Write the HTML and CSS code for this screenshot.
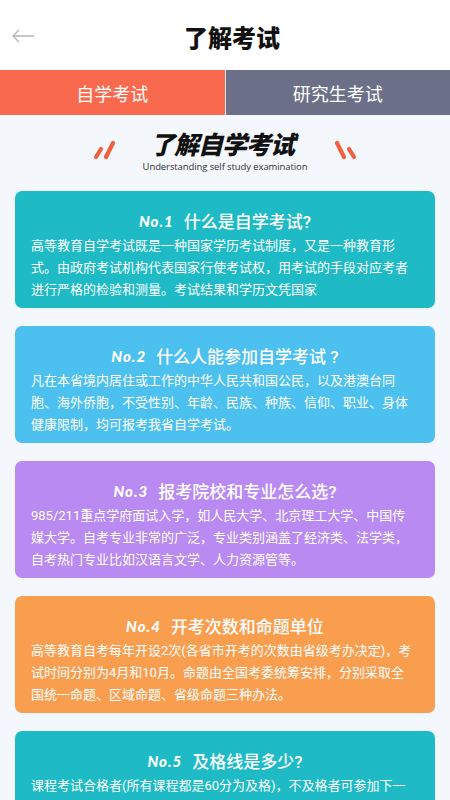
FILE: index.html
```html
<!DOCTYPE html>
<html lang="zh-CN">
<head>
    <meta charset="UTF-8">
    <title>了解考试</title>
    <link rel="stylesheet" href="styles.css">
</head>
<body>
    <div class="top-bar">
        <div class="back">
            <svg width="24" height="14" viewBox="0 0 24 14">
                <path d="M23 7H2M8 1L2 7l6 6" fill="none" stroke="#b5b5b5" stroke-width="1.3"/>
            </svg>
        </div>
        <h1>了解考试</h1>
        <div></div>
    </div>

    <div class="tabs">
        <div class="tab active">自学考试</div>
        <div class="tab">研究生考试</div>
    </div>

    <div class="section-head">
        <svg class="marks" width="24" height="20" viewBox="0 0 24 20">
            <path d="M3 17L8 9M13 17L20 3" stroke="#f2603f" stroke-width="4.2" stroke-linecap="round"/>
        </svg>
        <div class="head-text">
            <div class="head-title">了解自学考试</div>
            <div class="head-sub">Understanding self study examination</div>
        </div>
        <svg class="marks" width="24" height="20" viewBox="0 0 24 20">
            <path d="M4 3L11 17M16 9L21 17" stroke="#f2603f" stroke-width="4.2" stroke-linecap="round"/>
        </svg>
    </div>

    <div class="cards">
        <div class="card teal">
            <div class="card-title"><span class="num">No.1</span>什么是自学考试?</div>
            <p>高等教育自学考试既是一种国家学历考试制度，又是一种教育形式。由政府考试机构代表国家行使考试权，用考试的手段对应考者进行严格的检验和测量。考试结果和学历文凭国家</p>
        </div>
        <div class="card blue">
            <div class="card-title"><span class="num">No.2</span>什么人能参加自学考试 ?</div>
            <p>凡在本省境内居住或工作的中华人民共和国公民，以及港澳台同胞、海外侨胞，不受性别、年龄、民族、种族、信仰、职业、身体健康限制，均可报考我省自学考试。</p>
        </div>
        <div class="card purple">
            <div class="card-title"><span class="num">No.3</span>报考院校和专业怎么选?</div>
            <p>985/211重点学府面试入学，如人民大学、北京理工大学、中国传媒大学。自考专业非常的广泛，专业类别涵盖了经济类、法学类，自考热门专业比如汉语言文学、人力资源管等。</p>
        </div>
        <div class="card orange">
            <div class="card-title"><span class="num">No.4</span>开考次数和命题单位</div>
            <p>高等教育自考每年开设2次(各省市开考的次数由省级考办决定)，考试时间分别为4月和10月。命题由全国考委统筹安排，分别采取全国统一命题、区域命题、省级命题三种办法。</p>
        </div>
        <div class="card teal">
            <div class="card-title"><span class="num">No.5</span>及格线是多少?</div>
            <p>课程考试合格者(所有课程都是60分为及格)，不及格者可参加下一次考试，合格成绩长期有效，可累积计算。</p>
        </div>
    </div>
</body>
</html>
```

FILE: styles.css
```css
body {
    margin: 0;
    background: #f4f7fc;
    font-family: Roboto, "Noto Sans CJK SC", sans-serif;
    color: #222;
}

.top-bar {
    height: 70px;
    background: white;
    display: grid;
    grid-template-columns: 60px 1fr 60px;
    align-items: center;
}

.back {
    padding-left: 11px;
    padding-top: 2px;
    display: flex;
}

.top-bar h1 {
    margin: 0;
    text-align: center;
    font-size: 24px;
    font-weight: 900;
    color: #111;
    padding: 2px 0 0 14px;
}

.tabs {
    display: flex;
    height: 45px;
    gap: 1px;
    background: #e8e8ee;
}

.tab {
    flex: 1;
    display: flex;
    align-items: center;
    justify-content: center;
    font-size: 18px;
    color: white;
    background: #6b7088;
}

.tab.active {
    background: #f9694e;
}

.section-head {
    height: 76px;
    display: flex;
    align-items: center;
    justify-content: center;
    gap: 26px;
}

.marks {
    margin-top: -6px;
}

.head-text {
    text-align: center;
}

.head-title {
    font-size: 25px;
    font-weight: 900;
    font-style: italic;
    line-height: 26px;
    color: #111;
    letter-spacing: -1px;
    padding-right: 6px;
}

.head-sub {
    font-family: "Open Sans", sans-serif;
    font-size: 9.5px;
    line-height: 12px;
    color: #333;
    margin-top: 2px;
    letter-spacing: -0.1px;
}

.cards {
    display: flex;
    flex-direction: column;
    gap: 18px;
    padding: 0 15px 20px;
}

.card {
    border-radius: 7px;
    padding: 18px 16px 7px;
    color: white;
    min-height: 92px;
}

.teal { background: #1ebac5; }
.blue { background: #4cc0ef; }
.purple { background: #b88af2; }
.orange { background: #f99e4f; }

.card-title {
    text-align: center;
    font-size: 17px;
    font-weight: 500;
    line-height: 26px;
}

.num {
    font-family: Lato, sans-serif;
    font-weight: 900;
    font-style: italic;
    font-size: 15px;
    letter-spacing: 1px;
    margin-right: 10px;
    position: relative;
    top: -1px;
}

.card p {
    margin: 0;
    padding-right: 6px;
    font-size: 13px;
    line-height: 22px;
}
```
